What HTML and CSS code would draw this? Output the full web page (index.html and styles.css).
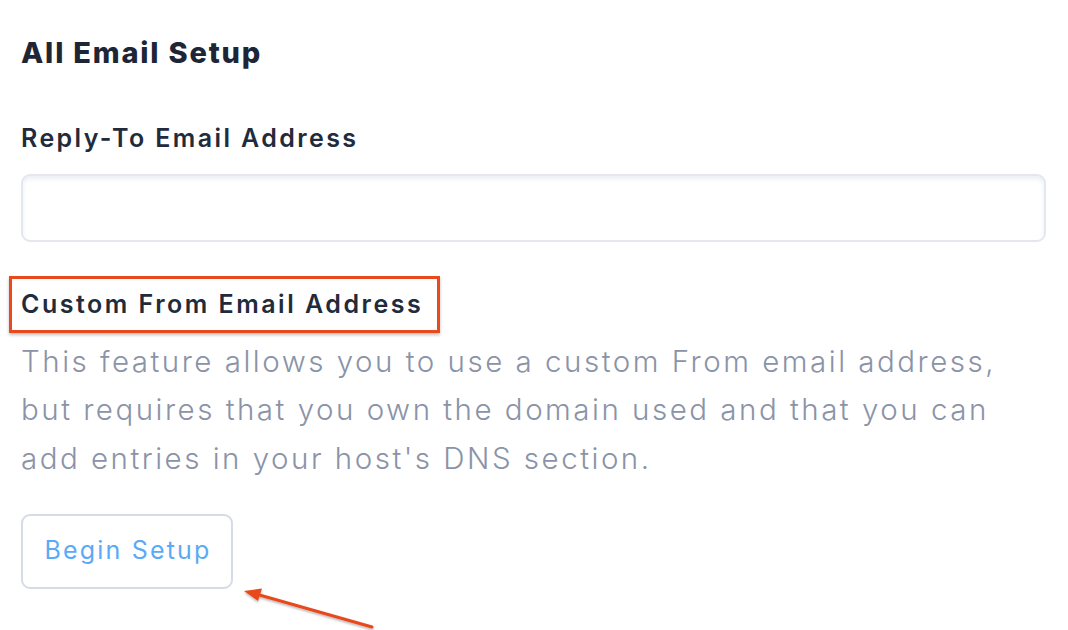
FILE: index.html
```html
<!DOCTYPE html>
<html>
<head>
<meta charset="utf-8">
<link rel="stylesheet" href="styles.css">
</head>
<body>
<div class="page">
  <h2 class="title">All Email Setup</h2>
  <label class="label label-reply">Reply-To Email Address</label>
  <input class="field" type="text">
  <div class="label label-custom">
    Custom From Email Address
    <span class="highlight"></span>
  </div>
  <p class="desc">This feature allows you to use a custom From email address, but requires that you own the domain used and that you can add entries in your host's DNS section.</p>
  <button class="btn" type="button">Begin Setup</button>
  <svg class="arrow" width="1068" height="630" viewBox="0 0 1068 630">
    <defs>
      <filter id="sh" x="-20%" y="-20%" width="140%" height="140%">
        <feDropShadow dx="0" dy="1.5" stdDeviation="1.2" flood-color="#000" flood-opacity="0.3"/>
      </filter>
    </defs>
    <g filter="url(#sh)">
      <line x1="372" y1="627" x2="256" y2="594" stroke="#e8491d" stroke-width="3" stroke-linecap="round"/>
      <polygon points="244,591 262,588.5 258,601" fill="#e8491d"/>
    </g>
  </svg>
</div>
</body>
</html>
```

FILE: styles.css
```css
html, body {
  margin: 0;
  padding: 0;
  background: #ffffff;
}
.page {
  position: relative;
  width: 1068px;
  height: 630px;
  box-sizing: border-box;
  padding: 35px 23px 0 21px;
  display: flex;
  flex-direction: column;
  align-items: flex-start;
  font-family: Inter, "Open Sans", sans-serif;
  overflow: hidden;
}
.title {
  margin: 0;
  font-size: 29px;
  line-height: 36px;
  font-weight: 800;
  letter-spacing: 1.8px;
  color: #1e2636;
}
.label {
  display: block;
  font-size: 25px;
  line-height: 34px;
  font-weight: 600;
  letter-spacing: 2.4px;
  color: #222b3b;
}
.label-reply {
  margin-top: 50.2px;
}
.field {
  margin-top: 18.8px;
  width: 1025px;
  height: 68px;
  box-sizing: border-box;
  border: 2px solid #e4e7f0;
  border-radius: 9px;
  background: #fff;
  box-shadow: inset 0 3px 4px rgba(200, 206, 225, 0.35);
  outline: none;
}
.label-custom {
  position: relative;
  margin-top: 45.2px;
  letter-spacing: 2.5px;
}
.highlight {
  position: absolute;
  left: -12px;
  top: -11.2px;
  width: 431px;
  height: 57px;
  box-sizing: border-box;
  border: 3px solid #e8491d;
  box-shadow: 0 2px 3px rgba(0, 0, 0, 0.25);
}
.desc {
  margin: 15.8px 0 0;
  width: 1010px;
  font-size: 29.5px;
  line-height: 48.5px;
  font-weight: 300;
  letter-spacing: 2.5px;
  color: #8a93a8;
}
.btn {
  margin-top: 31.5px;
  width: 212px;
  height: 75px;
  box-sizing: border-box;
  border: 2px solid #d6dbe6;
  border-radius: 9px;
  background: #fff;
  font-family: Inter, "Open Sans", sans-serif;
  font-size: 25px;
  font-weight: 400;
  letter-spacing: 2.2px;
  color: #5aaaf7;
  padding: 0 0 3px 2px;
}
.arrow {
  position: absolute;
  left: 0;
  top: 0;
  pointer-events: none;
}
```
